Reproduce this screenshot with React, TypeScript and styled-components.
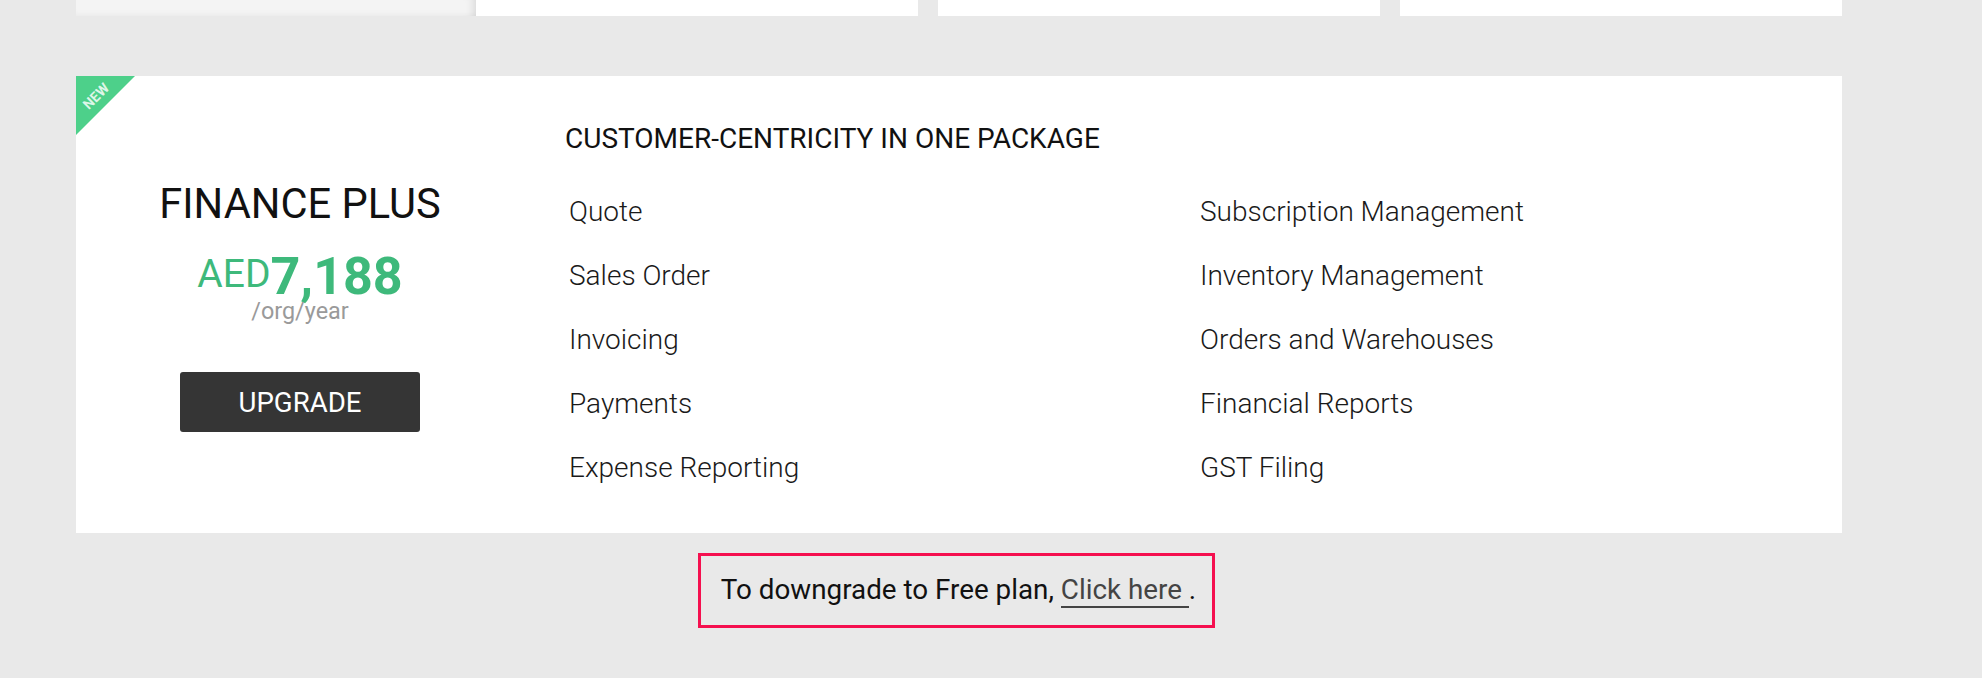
import React from "react";
import styled, { createGlobalStyle } from "styled-components";

const GlobalStyle = createGlobalStyle`
  html, body {
    margin: 0;
    padding: 0;
    background: #e9e9e9;
  }
  body {
    font-family: Roboto, "Liberation Sans", Arial, sans-serif;
    color: #111;
  }
  * { box-sizing: border-box; }
`;

const Page = styled.div`
  width: 1766px;
  margin-left: 76px;
  min-height: 678px;
  display: flex;
  flex-direction: column;
`;

const TopRow = styled.div`
  display: flex;
  height: 16px;
`;

const TopCard = styled.div<{ $width: number; $gap: number; $muted?: boolean }>`
  width: ${(p) => p.$width}px;
  margin-left: ${(p) => p.$gap}px;
  background: ${(p) => (p.$muted ? "#f4f4f4" : "#ffffff")};
  box-shadow: ${(p) =>
    p.$muted
      ? "inset -10px 0 10px -8px rgba(0,0,0,0.12), inset 0 -6px 6px -5px rgba(0,0,0,0.05)"
      : "none"};
`;

const PlanCard = styled.section`
  position: relative;
  margin-top: 60px;
  background: #ffffff;
  display: grid;
  grid-template-columns: 448px 1fr;
  column-gap: 41px;
`;

const Ribbon = styled.div`
  position: absolute;
  top: 0;
  left: 0;
  width: 59px;
  height: 59px;
  background: #4dd08a;
  clip-path: polygon(0 0, 100% 0, 0 100%);
`;

const RibbonText = styled.span`
  position: absolute;
  left: 20px;
  top: 20px;
  transform: translate(-50%, -50%) rotate(-45deg);
  font-size: 14px;
  font-weight: 700;
  letter-spacing: 0.2px;
  color: rgba(255, 255, 255, 0.82);
  line-height: 1;
`;

const Summary = styled.div`
  display: flex;
  flex-direction: column;
  align-items: center;
  justify-content: center;
  padding-top: 4px;
`;

const PlanName = styled.h2`
  margin: 0;
  font-size: 41.6px;
  font-weight: 400;
  line-height: 48px;
  color: #111;
  white-space: nowrap;
`;

const Price = styled.div`
  margin-top: 25px;
  font-size: 52px;
  line-height: 48px;
  color: #3eb97b;
  white-space: nowrap;
`;

const Currency = styled.span`
  font-size: 39px;
  font-weight: 400;
  line-height: 1;
  vertical-align: 7px;
`;

const Amount = styled.span`
  font-weight: 700;
`;

const Period = styled.div`
  font-size: 23.4px;
  line-height: 20px;
  color: #9a9a9a;
`;

const UpgradeButton = styled.button`
  margin-top: 51px;
  width: 240px;
  height: 60px;
  border: none;
  border-radius: 3px;
  background: #353535;
  color: #ffffff;
  font-family: inherit;
  font-size: 27.6px;
  font-weight: 400;
  cursor: pointer;
`;

const Features = styled.div`
  padding: 47px 0 32px;
`;

const FeaturesTitle = styled.h3`
  margin: 0;
  font-size: 28px;
  font-weight: 400;
  line-height: 32px;
  color: #111;
  white-space: nowrap;
`;

const FeatureGrid = styled.ul`
  margin: 24.6px 0 0;
  padding: 0;
  list-style: none;
  display: grid;
  grid-template-columns: 631px 631px;
  grid-template-rows: repeat(5, 64.2px);
  grid-auto-flow: column;
`;

const Feature = styled.li`
  padding-left: 4px;
  font-size: 28px;
  font-weight: 300;
  line-height: 64.2px;
  color: #1a1a1a;
  white-space: nowrap;
`;

const Notice = styled.p`
  align-self: center;
  margin: 20px 5px 0 0;
  border: 3px solid #f5104f;
  padding: 18.5px 16px 18.5px 20px;
  font-size: 27.8px;
  line-height: 32px;
  color: #111;
  white-space: nowrap;
`;

const NoticeLink = styled.a`
  color: #444;
  text-decoration: none;
  border-bottom: 2px solid #444;
  cursor: pointer;
`;

const leftFeatures = ["Quote", "Sales Order", "Invoicing", "Payments", "Expense Reporting"];
const rightFeatures = [
  "Subscription Management",
  "Inventory Management",
  "Orders and Warehouses",
  "Financial Reports",
  "GST Filing",
];

export default function App() {
  return (
    <>
      <GlobalStyle />
      <Page>
        <TopRow>
          <TopCard $width={400} $gap={0} $muted />
          <TopCard $width={442} $gap={0} />
          <TopCard $width={442} $gap={20} />
          <TopCard $width={442} $gap={20} />
        </TopRow>

        <PlanCard>
          <Ribbon>
            <RibbonText>NEW</RibbonText>
          </Ribbon>
          <Summary>
            <PlanName>FINANCE PLUS</PlanName>
            <Price>
              <Currency>AED</Currency>
              <Amount>7,188</Amount>
            </Price>
            <Period>/org/year</Period>
            <UpgradeButton>UPGRADE</UpgradeButton>
          </Summary>
          <Features>
            <FeaturesTitle>CUSTOMER-CENTRICITY IN ONE PACKAGE</FeaturesTitle>
            <FeatureGrid>
              {[...leftFeatures, ...rightFeatures].map((f) => (
                <Feature key={f}>{f}</Feature>
              ))}
            </FeatureGrid>
          </Features>
        </PlanCard>

        <Notice>
          To downgrade to Free plan, <NoticeLink>Click here </NoticeLink>.
        </Notice>
      </Page>
    </>
  );
}
